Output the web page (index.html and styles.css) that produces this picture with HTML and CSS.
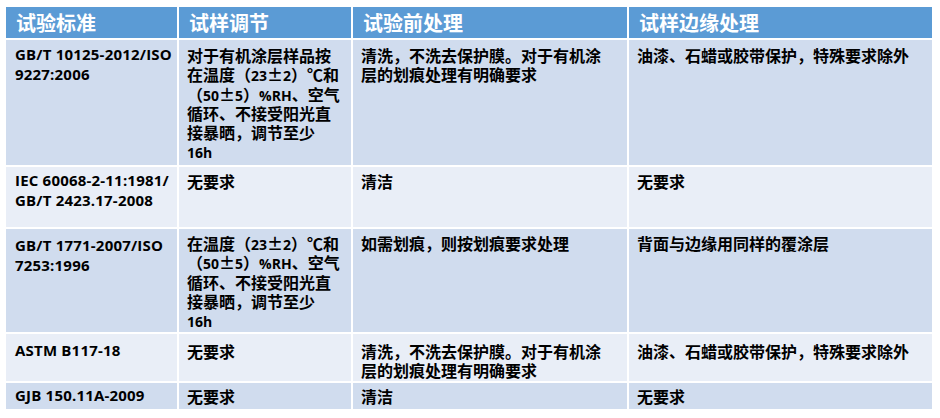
FILE: index.html
```html
<!DOCTYPE html>
<html lang="zh-CN">
<head>
<meta charset="utf-8">
<title>试验条件对比</title>
<link rel="stylesheet" href="styles.css">
</head>
<body>
<table class="spec">
  <colgroup>
    <col class="c1"><col class="c2"><col class="c3"><col class="c4">
  </colgroup>
  <thead>
    <tr class="head">
      <th>试验标准</th>
      <th>试样调节</th>
      <th>试验前处理</th>
      <th>试样边缘处理</th>
    </tr>
  </thead>
  <tbody>
    <tr class="r1 dark">
      <td class="std">GB/T 10125-2012/ISO<br>9227:2006</td>
      <td>对于有机涂层样品按<br>在温度（<span class="lat">23</span>±<span class="lat">2</span>）℃和<br>（<span class="lat">50</span>±<span class="lat">5</span>）<span class="lat">%RH</span>、空气<br>循环、不接受阳光直<br>接暴晒，调节至少<br><span class="lat">16h</span></td>
      <td>清洗，不洗去保护膜。对于有机涂<br>层的划痕处理有明确要求</td>
      <td>油漆、石蜡或胶带保护，特殊要求除外</td>
    </tr>
    <tr class="r2 light">
      <td class="std">IEC 60068-2-11:1981/<br>GB/T 2423.17-2008</td>
      <td>无要求</td>
      <td>清洁</td>
      <td>无要求</td>
    </tr>
    <tr class="r3 dark">
      <td class="std">GB/T 1771-2007/ISO<br>7253:1996</td>
      <td>在温度（<span class="lat">23</span>±<span class="lat">2</span>）℃和<br>（<span class="lat">50</span>±<span class="lat">5</span>）<span class="lat">%RH</span>、空气<br>循环、不接受阳光直<br>接暴晒，调节至少<br><span class="lat">16h</span></td>
      <td>如需划痕，则按划痕要求处理</td>
      <td>背面与边缘用同样的覆涂层</td>
    </tr>
    <tr class="r4 light">
      <td class="std">ASTM B117-18</td>
      <td>无要求</td>
      <td>清洗，不洗去保护膜。对于有机涂<br>层的划痕处理有明确要求</td>
      <td>油漆、石蜡或胶带保护，特殊要求除外</td>
    </tr>
    <tr class="r5 dark">
      <td class="std">GJB 150.11A-2009</td>
      <td>无要求</td>
      <td>清洁</td>
      <td>无要求</td>
    </tr>
  </tbody>
</table>
</body>
</html>
```

FILE: styles.css
```css
html, body {
  margin: 0;
  padding: 0;
  background: #ffffff;
}

body {
  font-family: "Noto Sans CJK SC", sans-serif;
  color: #000000;
}

.spec {
  border-collapse: separate;
  border-spacing: 2px;
  margin: 5px 0 0 4px;
  table-layout: fixed;
  width: 930px;
}

.c1 { width: 171px; }
.c2 { width: 172px; }
.c3 { width: 274px; }
.c4 { width: 303px; }

.head { height: 31px; }

.head th {
  background: #5b9bd5;
  color: #ffffff;
  padding: 0 0 0 10px;
  text-align: left;
  vertical-align: middle;
  font-family: "Noto Sans CJK SC", sans-serif;
  font-weight: 700;
  font-size: 20px;
  line-height: 31px;
  white-space: nowrap;
}

td {
  vertical-align: top;
  text-align: left;
  padding: 6px 4px 0 8px;
  font-size: 16px;
  line-height: 19.3px;
  font-weight: 700;
  white-space: nowrap;
  overflow: hidden;
}

.dark td { background: #d0dcee; }
.light td { background: #e9eef7; }

.lat {
  font-family: "Open Sans", "Noto Sans CJK SC", sans-serif;
  font-weight: 700;
  font-size: 14px;
  line-height: 1;
}

td.std {
  font-family: "Open Sans", "Noto Sans CJK SC", sans-serif;
  font-size: 15px;
  letter-spacing: 0.2px;
  line-height: 20px;
  padding-left: 9px;
}

.r1 { height: 125px; }
.r2 { height: 60px; }
.r3 { height: 103px; }
.r4 { height: 47px; }
.r5 { height: 26px; }

.r1 td { padding-top: 6px; }
.r1 td.std { padding-top: 4px; }
.r2 td { padding-top: 5px; }
.r2 td.std { padding-top: 3px; }
.r3 td { padding-top: 5px; }
.r3 td.std { padding-top: 6px; }
.r4 td { padding-top: 8px; }
.r4 td.std { padding-top: 6px; }
.r5 td { padding-top: 4px; }
.r5 td.std { padding-top: 2px; }
```
